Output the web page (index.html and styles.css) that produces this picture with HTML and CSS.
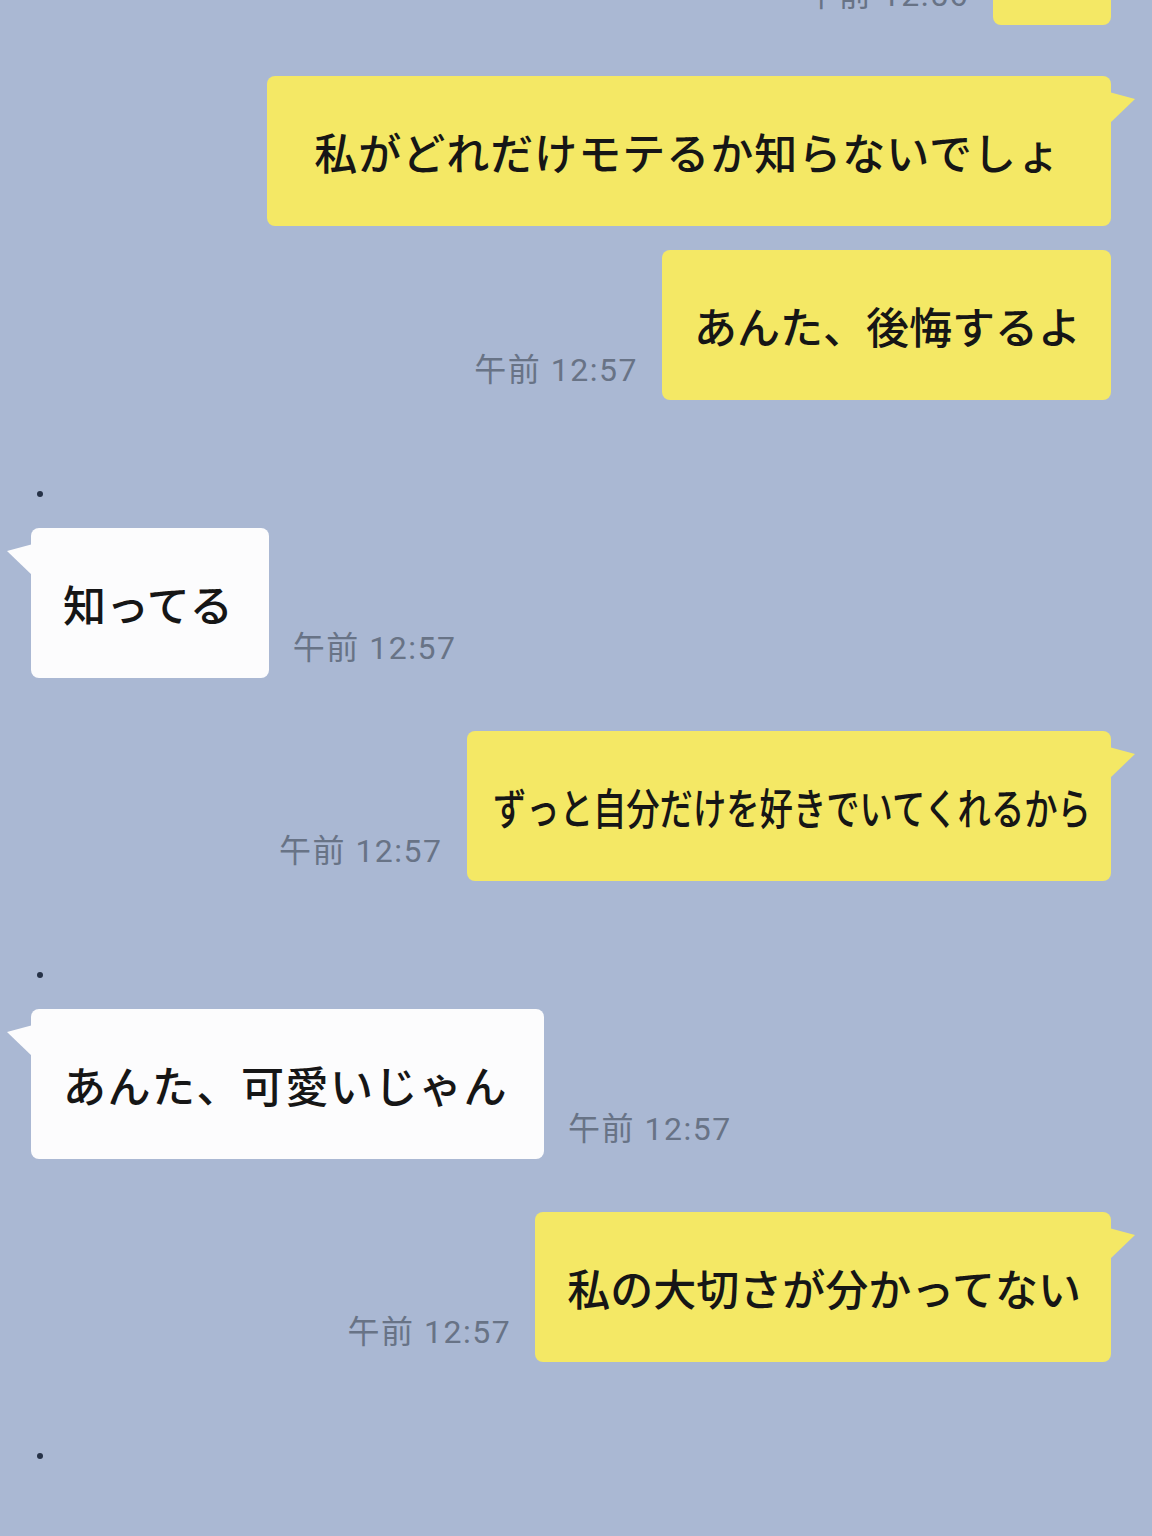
FILE: index.html
```html
<!DOCTYPE html>
<html>

	<head>
		<meta charset="UTF-8">
		<title>トーク</title>
		<link rel="stylesheet" href="styles.css">
	</head>

	<body>
		<div class="talk">
			<div class="row mine top_cut">
				<span class="time">午前 12:56</span>
				<div class="bubble yellow blank"></div>
			</div>

			<div class="row mine first">
				<div class="bubble yellow tail wide">私がどれだけモテるか知らないでしょ</div>
			</div>
			<div class="row mine near">
				<span class="time">午前 12:57</span>
				<div class="bubble yellow">あんた、後悔するよ</div>
			</div>

			<i class="dot"></i>
			<div class="row theirs">
				<div class="bubble white tail short">知ってる</div>
				<span class="time">午前 12:57</span>
			</div>

			<div class="row mine far">
				<span class="time">午前 12:57</span>
				<div class="bubble yellow tail tight"><span class="squeeze">ずっと自分だけを好きでいてくれるから</span></div>
			</div>

			<i class="dot"></i>
			<div class="row theirs">
				<div class="bubble white tail loose">あんた、可愛いじゃん</div>
				<span class="time">午前 12:57</span>
			</div>

			<div class="row mine far">
				<span class="time">午前 12:57</span>
				<div class="bubble yellow tail">私の大切さが分かってない</div>
			</div>

			<i class="dot"></i>
		</div>
	</body>

</html>
```

FILE: styles.css
```css
html,
body {
	margin: 0;
	min-height: 100%;
	background-color: #aab8d3;
}

body {
	font-family: "Noto Sans CJK JP", "Noto Sans", sans-serif;
	color: #161616;
	overflow: hidden;
	height: 1536px;
}

.talk {
	display: flex;
	flex-direction: column;
	padding: 0 41px 0 31px;
}

.row {
	display: flex;
	align-items: flex-end;
	gap: 24px;
}

.mine {
	justify-content: flex-end;
}

.theirs {
	justify-content: flex-start;
	margin-top: 31px;
}

.top_cut {
	margin-top: -125px;
}

.first {
	margin-top: 51px;
}

.near {
	margin-top: 24px;
}

.far {
	margin-top: 53px;
}

.bubble {
	position: relative;
	box-sizing: border-box;
	height: 150px;
	padding: 0 30px 0 32px;
	border-radius: 8px;
	display: flex;
	align-items: center;
	font-size: 43px;
	font-weight: 500;
	line-height: 1;
	white-space: nowrap;
}

.wide {
	padding: 0 50px 0 47px;
	letter-spacing: 1px;
}

.short {
	padding-right: 36px;
}

.loose {
	padding-right: 36px;
	letter-spacing: 1.5px;
}

.tight {
	padding: 0 21px 0 26px;
}

/* 横につぶれた文字 */
.squeeze {
	display: inline-block;
	transform: scaleX(.775);
	transform-origin: 0 50%;
	margin-right: -174px;
}

.yellow {
	background-color: #f4e865;
}

.white {
	background-color: #fcfcfd;
}

.blank {
	width: 118px;
	padding: 0;
}

/* 吹き出しのしっぽ */
.tail::after {
	content: '';
	position: absolute;
	top: 16px;
	width: 26px;
	height: 32px;
	background-color: inherit;
}

.mine .tail::after {
	right: -24px;
	clip-path: polygon(0 0, 100% 22%, 0 100%);
}

.theirs .tail::after {
	left: -24px;
	clip-path: polygon(100% 0, 0 22%, 100% 100%);
}

.time {
	font-family: Roboto, "Noto Sans CJK JP", sans-serif;
	font-size: 32px;
	letter-spacing: 1.5px;
	color: #687386;
	line-height: 1;
	padding-bottom: 14px;
	white-space: nowrap;
}

.dot {
	display: block;
	width: 6px;
	height: 6px;
	border-radius: 50%;
	background-color: #263247;
	margin: 91px 0 0 6px;
}
```
